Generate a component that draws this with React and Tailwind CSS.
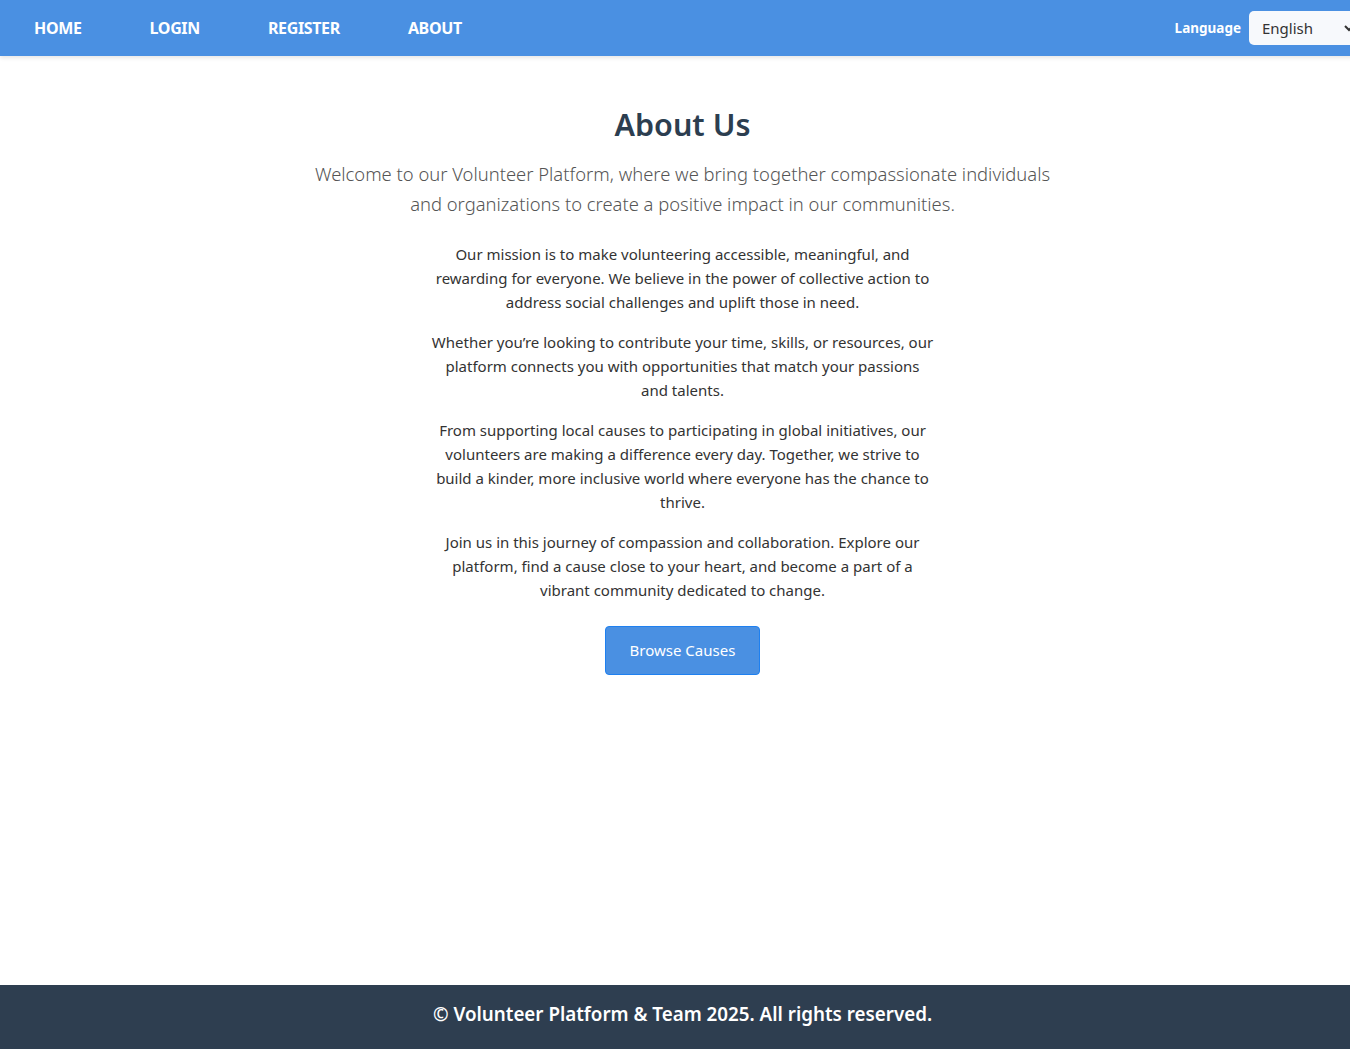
import React from "react";

export default function App() {
  return (
    <div className="min-h-screen w-[1365px] flex flex-col bg-white font-['Noto_Sans',sans-serif]">
      <nav className="h-[56px] bg-[#4a90e2] flex items-center shadow-[0_2px_4px_rgba(0,0,0,0.1)] relative z-10">
        <div className="flex items-center pl-[34px] gap-[68px]">
          {["HOME", "LOGIN", "REGISTER", "ABOUT"].map((t) => (
            <a key={t} className="text-white font-bold text-[16px] tracking-[-0.35px]">{t}</a>
          ))}
        </div>
        <div className="ml-auto flex items-center gap-[8px]">
          <span className="text-white font-bold text-[13.5px]">Language</span>
          <div className="w-[116px] h-[34px] bg-[#f7f9fc] rounded-[5px] flex items-center pl-[13px] pr-[10px] text-[#333] text-[15px]">
            <span>English</span>
            <svg className="ml-auto" width="12" height="12" viewBox="0 0 12 12">
              <path d="M2 4 L6 8 L10 4" stroke="#333" strokeWidth="2" fill="none" />
            </svg>
          </div>
        </div>
      </nav>
      <main className="flex-1 flex flex-col items-center pt-[48px]">
        <h1 className="text-[30.5px] font-semibold text-[#2c3e50] leading-[40px]">About Us</h1>
        <p className="mt-[15px] max-w-[760px] text-center text-[18.4px] font-light text-[#555] leading-[30px]">
          Welcome to our Volunteer Platform, where we bring together compassionate individuals and organizations to create a positive impact in our communities.
        </p>
        <div className="mt-[23px] max-w-[503px] text-center text-[15px] leading-[24px] text-[#333] flex flex-col gap-[16px]">
          <p>Our mission is to make volunteering accessible, meaningful, and rewarding for everyone. We believe in the power of collective action to address social challenges and uplift those in need.</p>
          <p>Whether you’re looking to contribute your time, skills, or resources, our platform connects you with opportunities that match your passions and talents.</p>
          <p>From supporting local causes to participating in global initiatives, our volunteers are making a difference every day. Together, we strive to build a kinder, more inclusive world where everyone has the chance to thrive.</p>
          <p>Join us in this journey of compassion and collaboration. Explore our platform, find a cause close to your heart, and become a part of a vibrant community dedicated to change.</p>
        </div>
        <button className="mt-[24px] w-[155px] h-[49px] bg-[#4a90e2] border border-[#1e80f0] rounded-[4px] text-white text-[15px]">
          Browse Causes
        </button>
      </main>
      <footer className="h-[64px] bg-[#2e3e50] flex items-center justify-center pb-[5px]">
        <span className="text-white text-[18.8px] font-semibold">© Volunteer Platform &amp; Team 2025. All rights reserved.</span>
      </footer>
    </div>
  );
}
